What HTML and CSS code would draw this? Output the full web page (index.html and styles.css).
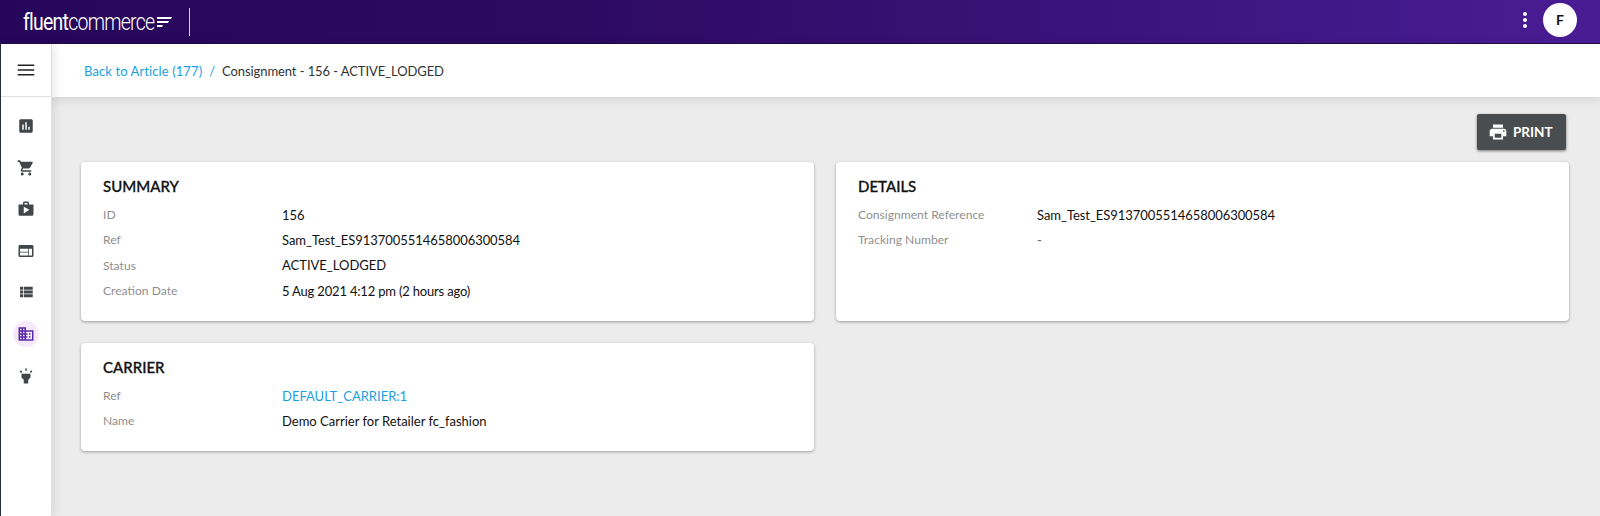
FILE: index.html
```html
<!DOCTYPE html>
<html lang="en">
<head>
    <meta charset="UTF-8">
    <title>Consignment - 156</title>
    <link rel="stylesheet" href="styles.css">
</head>
<body>

    <!-- Top bar -->
    <div class="topbar">
        <div class="logo">
            <span class="logo-text"><span class="logo-bold">fluent</span>commerce</span>
            <svg class="logo-mark" width="15" height="10" viewBox="0 0 15 10">
                <polygon points="0,0 15,0 14,2 0,2" fill="#fff"/>
                <polygon points="0,4 12,4 11,6 0,6" fill="#fff"/>
                <polygon points="0,8 6,8 5,10 0,10" fill="#fff"/>
            </svg>
        </div>
        <div class="logo-divider"></div>
        <div class="topbar-right">
            <svg class="more-icon" width="24" height="24" viewBox="0 0 24 24"><path fill="#fff" d="M12 8c1.1 0 2-.9 2-2s-.9-2-2-2-2 .9-2 2 .9 2 2 2zm0 2c-1.1 0-2 .9-2 2s.9 2 2 2 2-.9 2-2-.9-2-2-2zm0 6c-1.1 0-2 .9-2 2s.9 2 2 2 2-.9 2-2-.9-2-2-2z"/></svg>
            <div class="avatar">F</div>
        </div>
    </div>

    <div class="app">
        <!-- Sidebar -->
        <div class="sidebar">
            <div class="menu-row">
                <svg width="22" height="22" viewBox="0 0 24 24"><path fill="#222" d="M3 18h18v-1.6H3V18zm0-5.2h18v-1.6H3v1.6zM3 6v1.6h18V6H3z"/></svg>
            </div>
            <div class="side-icons">
                <div class="side-icon"><svg width="18" height="18" viewBox="0 0 24 24"><path d="M19 3H5c-1.1 0-2 .9-2 2v14c0 1.1.9 2 2 2h14c1.1 0 2-.9 2-2V5c0-1.1-.9-2-2-2zM9 17H7v-7h2v7zm4 0h-2V7h2v10zm4 0h-2v-4h2v4z"/></svg></div>
                <div class="side-icon"><svg width="18" height="18" viewBox="0 0 24 24"><path d="M7 18c-1.1 0-1.99.9-1.99 2S5.9 22 7 22s2-.9 2-2-.9-2-2-2zM1 2v2h2l3.6 7.59-1.35 2.45c-.16.28-.25.61-.25.96 0 1.1.9 2 2 2h12v-2H7.42c-.14 0-.25-.11-.25-.25l.03-.12.9-1.83h7.45c.75 0 1.41-.41 1.75-1.03l3.58-6.49c.08-.14.12-.31.12-.48 0-.55-.45-1-1-1H5.21l-.94-2H1zm16 16c-1.1 0-1.99.9-1.99 2s.89 2 1.99 2 2-.9 2-2-.9-2-2-2z"/></svg></div>
                <div class="side-icon"><svg width="18" height="18" viewBox="0 0 24 24"><path d="M16 6V4c0-1.11-.89-2-2-2h-4c-1.11 0-2 .89-2 2v2H2v13c0 1.11.89 2 2 2h16c1.11 0 2-.89 2-2V6h-6zm-6-2h4v2h-4V4zM9 18V9l7.5 4L9 18z"/></svg></div>
                <div class="side-icon"><svg width="18" height="18" viewBox="0 0 24 24"><path d="M20 4H4c-1.1 0-1.99.9-1.99 2L2 18c0 1.1.9 2 2 2h16c1.1 0 2-.9 2-2V6c0-1.1-.9-2-2-2zm-5 14H4v-4h11v4zm0-5H4V9h11v4zm5 5h-4V9h4v9z"/></svg></div>
                <div class="side-icon"><svg width="18" height="18" viewBox="0 0 24 24"><path d="M4 14h4v-4H4v4zm0 5h4v-4H4v4zM4 9h4V5H4v4zm5 5h12v-4H9v4zm0 5h12v-4H9v4zM9 5v4h12V5H9z"/></svg></div>
                <div class="side-icon active"><svg width="18" height="18" viewBox="0 0 24 24"><path d="M12 7V3H2v18h20V7H12zM6 19H4v-2h2v2zm0-4H4v-2h2v2zm0-4H4V9h2v2zm0-4H4V5h2v2zm4 12H8v-2h2v2zm0-4H8v-2h2v2zm0-4H8V9h2v2zm0-4H8V5h2v2zm10 12h-8v-2h2v-2h-2v-2h2v-2h-2V9h8v10zm-2-8h-2v2h2v-2zm0 4h-2v2h2v-2z"/></svg></div>
                <div class="side-icon"><svg width="18" height="18" viewBox="0 0 24 24"><path d="M6 14l3 3v5h6v-5l3-3V9H6zm5-12h2v3h-2zM3.5 5.875L4.914 4.46l2.12 2.122L5.62 7.997zm13.46.71l2.123-2.12 1.414 1.414L18.375 8z"/></svg></div>
            </div>
        </div>

        <!-- Main content -->
        <div class="main">
            <div class="breadcrumb">
                <a href="#">Back to Article (177)</a>
                <span class="crumb-sep">/</span>
                <span class="crumb-current">Consignment - 156 - ACTIVE_LODGED</span>
            </div>

            <div class="content">
                <div class="actions">
                    <button class="print-btn">
                        <svg width="20" height="20" viewBox="0 0 24 24"><path fill="#fff" d="M19 8H5c-1.66 0-3 1.34-3 3v6h4v4h12v-4h4v-6c0-1.66-1.34-3-3-3zm-3 11H8v-5h8v5zm3-7c-.55 0-1-.45-1-1s.45-1 1-1 1 .45 1 1-.45 1-1 1zm-1-9H6v4h12V3z"/></svg>
                        PRINT
                    </button>
                </div>

                <div class="card-grid">
                    <div class="card">
                        <h3>SUMMARY</h3>
                        <div class="row"><span class="label">ID</span><span class="value">156</span></div>
                        <div class="row"><span class="label">Ref</span><span class="value ref">Sam_Test_ES9137005514658006300584</span></div>
                        <div class="row"><span class="label">Status</span><span class="value">ACTIVE_LODGED</span></div>
                        <div class="row"><span class="label">Creation Date</span><span class="value date">5 Aug 2021 4:12 pm (2 hours ago)</span></div>
                    </div>
                    <div class="card">
                        <h3>DETAILS</h3>
                        <div class="row"><span class="label">Consignment Reference</span><span class="value ref">Sam_Test_ES9137005514658006300584</span></div>
                        <div class="row"><span class="label">Tracking Number</span><span class="value muted">-</span></div>
                    </div>
                    <div class="card">
                        <h3>CARRIER</h3>
                        <div class="row"><span class="label">Ref</span><a class="value link" href="#">DEFAULT_CARRIER:1</a></div>
                        <div class="row"><span class="label">Name</span><span class="value">Demo Carrier for Retailer fc_fashion</span></div>
                    </div>
                </div>
            </div>
        </div>
    </div>

</body>
</html>
```

FILE: styles.css
```css
* {
    box-sizing: border-box;
}

html, body {
    height: 100%;
}

body {
    margin: 0;
    font-family: Lato, "Open Sans", sans-serif;
    background-color: #ececec;
    color: #111;
    overflow: hidden;
}

/* Top bar */
.topbar {
    display: flex;
    align-items: center;
    height: 44px;
    padding-left: 23px;
    padding-right: 23px;
    background: linear-gradient(90deg, #26065a 0%, #2c0a61 35%, #4a1c94 100%);
    border-bottom: 1px solid #1f0a4a;
}

.logo {
    display: flex;
    align-items: center;
    width: 166px;
    color: white;
}

.logo-text {
    display: inline-block;
    font-family: Roboto, sans-serif;
    font-size: 24px;
    font-weight: 300;
    letter-spacing: -0.9px;
    transform: scaleX(0.81);
    transform-origin: left center;
    width: 134px;
    white-space: nowrap;
}

.logo-bold {
    font-weight: 400;
}

.logo-mark {
    margin-top: 1px;
}

.logo-divider {
    width: 1px;
    height: 28px;
    background-color: #d8d2e6;
}

.topbar-right {
    display: flex;
    align-items: center;
    margin-left: auto;
    padding-bottom: 4px;
    gap: 6px;
}

.avatar {
    display: flex;
    align-items: center;
    justify-content: center;
    width: 34px;
    height: 34px;
    border-radius: 50%;
    background-color: white;
    color: #111;
    font-size: 14px;
    font-weight: 700;
}

/* Sidebar */
.app {
    display: flex;
    height: calc(100% - 44px);
}

.sidebar {
    flex: 0 0 52px;
    background-color: white;
    border-left: 1px solid #24303a;
    border-right: 1px solid #e0e0e0;
    box-shadow: 2px 0 10px rgba(0, 0, 0, 0.1);
    z-index: 2;
}

.menu-row {
    display: flex;
    align-items: center;
    justify-content: center;
    height: 53px;
    border-bottom: 1px solid #e0e0e0;
}

.side-icons {
    display: flex;
    flex-direction: column;
    align-items: center;
    padding-top: 16px;
    gap: 15.6px;
}

.side-icon {
    display: flex;
    align-items: center;
    justify-content: center;
    width: 26px;
    height: 26px;
    border-radius: 50%;
    fill: #424649;
}

.side-icon.active {
    background-color: #f6e9fc;
    fill: #5b2aa8;
}

/* Main content */
.main {
    flex: 1;
    min-width: 0;
}

.breadcrumb {
    display: flex;
    align-items: center;
    height: 53px;
    padding-left: 32px;
    background-color: white;
    box-shadow: 0 2px 10px rgba(0, 0, 0, 0.12);
    font-size: 13px;
}

.breadcrumb a {
    color: #1b9fdf;
    text-decoration: none;
    letter-spacing: 0.1px;
}

.crumb-sep {
    color: #1b9fdf;
    margin: 0 7px;
}

.crumb-current {
    color: #333;
    letter-spacing: -0.09px;
}

.content {
    padding: 17px 31px 0 29px;
}

.actions {
    display: flex;
    justify-content: flex-end;
    padding-right: 3px;
    margin-bottom: 12px;
}

.print-btn {
    display: flex;
    align-items: center;
    gap: 5px;
    width: 89px;
    height: 36px;
    padding: 0 0 0 11px;
    border: none;
    border-radius: 2px;
    background-color: #4a4d50;
    color: white;
    font-family: inherit;
    font-size: 13.5px;
    font-weight: 700;
    box-shadow: 0 1px 3px rgba(0, 0, 0, 0.5);
}

.card-grid {
    display: grid;
    grid-template-columns: 1fr 1fr;
    gap: 22px;
}

.card {
    padding: 14px 22px 0;
    min-height: 108px;
    background-color: white;
    border-radius: 4px;
    box-shadow: 0 1px 3px rgba(0, 0, 0, 0.35);
}

.card h3 {
    margin: 0 0 6px;
    height: 20px;
    font-size: 15px;
    line-height: 20px;
    font-weight: 500;
    color: #111;
    -webkit-text-stroke: 0.3px #111;
}

.card:nth-child(-n+2) {
    height: 159px;
}

.row {
    display: flex;
    align-items: center;
    height: 25.3px;
    font-size: 13px;
}

.label {
    flex: 0 0 179px;
    color: #8f8f8f;
    font-size: 12.1px;
}

.value {
    color: #111;
}

.value.ref {
    letter-spacing: -0.05px;
}

.value.date {
    letter-spacing: -0.18px;
}

.value.muted {
    color: #666;
}

.value.link {
    color: #1b9fdf;
    text-decoration: none;
}
```
